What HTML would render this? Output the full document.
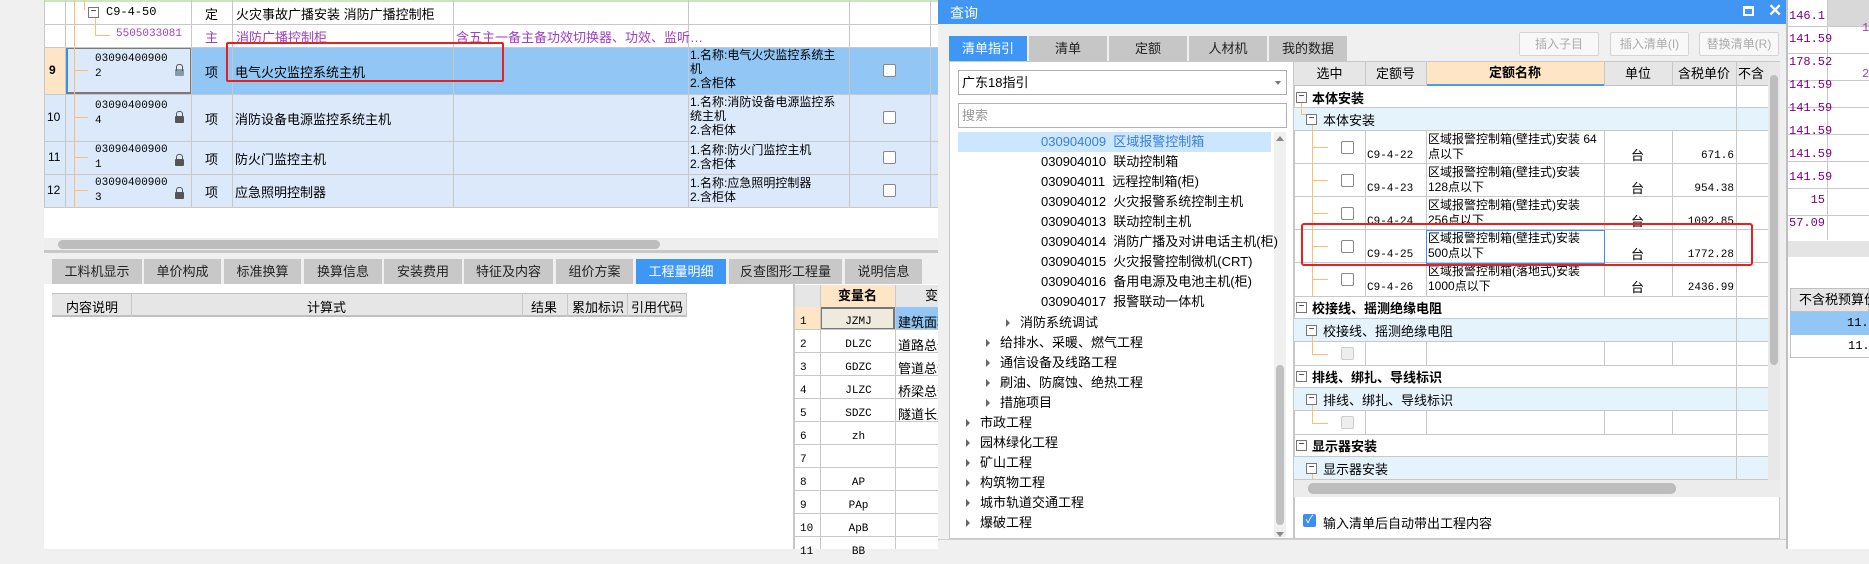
<!DOCTYPE html>
<html><head><meta charset="utf-8">
<style>
*{margin:0;padding:0;box-sizing:border-box}
body{width:1869px;height:549px;overflow:hidden;background:#f0f0f0;font-family:"Liberation Sans","Noto Sans CJK SC",sans-serif;font-size:12px;color:#000;position:relative}
.a{position:absolute}
.mono{font-family:"Liberation Mono","Noto Sans CJK SC",monospace}
.cb{position:absolute;width:13px;height:13px;border:1px solid #888;background:#fff;border-radius:2px}
.tab{position:absolute;top:259px;height:25px;background:#c8c8c8;text-align:center;line-height:25px;font-size:13px;color:#222}
.dt{position:absolute;top:36px;height:25px;background:#c6c6c6;text-align:center;line-height:25px;font-size:13px;color:#222}
.li{position:absolute;height:20px;line-height:20px;font-size:13px;white-space:nowrap}
.arr{position:absolute;width:0;height:0;border-left:4px solid #666;border-top:4px solid transparent;border-bottom:4px solid transparent}
.box{position:absolute;width:11px;height:11px;border:1px solid #777;background:#fff;font-size:10px;line-height:8px;text-align:center}
.rr{position:absolute;left:1294px;width:474px;border-bottom:1px solid #c8c8c8}
.lock{position:absolute;width:9px;height:7px;background:#555;border-radius:1px}
.lock:before{content:"";position:absolute;left:1px;top:-5px;width:5px;height:6px;border:1px solid #555;border-bottom:none;border-radius:3px 3px 0 0}
</style></head><body>
<!-- main grid -->
<div class="a" style="left:44px;top:0;width:900px;height:250px;background:#fff"></div>
<div class="a" style="left:44px;top:0;width:900px;height:2px;background:#c9e8c0"></div>
<div class="a" style="left:44px;top:47px;width:900px;height:160px;background:#dce9fb"></div>
<div class="a" style="left:191px;top:47px;width:760px;height:47px;background:#92c6f4"></div>
<div class="a" style="left:44px;top:47px;width:22px;height:47px;background:#fde5c6"></div>
<div class="a" style="left:66px;top:47px;width:126px;height:47px;border:2px solid #7a7a7a;border-left:2px solid #3d8ef0"></div>
<div class="a" style="left:44px;top:24px;width:900px;height:1px;background:#c8c8c8"></div>
<div class="a" style="left:44px;top:47px;width:900px;height:1px;background:#c8c8c8"></div>
<div class="a" style="left:44px;top:94px;width:900px;height:1px;background:#c8c8c8"></div>
<div class="a" style="left:44px;top:141px;width:900px;height:1px;background:#c8c8c8"></div>
<div class="a" style="left:44px;top:174px;width:900px;height:1px;background:#c8c8c8"></div>
<div class="a" style="left:44px;top:207px;width:900px;height:1px;background:#c8c8c8"></div>
<div class="a" style="left:44px;top:0;width:1px;height:208px;background:#c8c8c8"></div>
<div class="a" style="left:65px;top:0;width:1px;height:208px;background:#c8c8c8"></div>
<div class="a" style="left:191px;top:0;width:1px;height:208px;background:#c8c8c8"></div>
<div class="a" style="left:232px;top:0;width:1px;height:208px;background:#c8c8c8"></div>
<div class="a" style="left:453px;top:0;width:1px;height:208px;background:#c8c8c8"></div>
<div class="a" style="left:688px;top:0;width:1px;height:208px;background:#c8c8c8"></div>
<div class="a" style="left:849px;top:0;width:1px;height:208px;background:#c8c8c8"></div>
<div class="a" style="left:930px;top:0;width:1px;height:208px;background:#c8c8c8"></div>
<div class="a" style="left:74px;top:0;width:1px;height:208px;background:#f8c070"></div>
<div class="a" style="left:84px;top:0;width:1px;height:10px;background:#f8c070"></div>
<div class="a" style="left:95px;top:18px;width:1px;height:18px;background:#f8c070"></div>
<div class="a" style="left:95px;top:35px;width:15px;height:1px;background:#f8c070"></div>
<div class="a" style="left:74px;top:70px;width:14px;height:1px;background:#f8c070"></div>
<div class="a" style="left:74px;top:117px;width:14px;height:1px;background:#f8c070"></div>
<div class="a" style="left:74px;top:157px;width:14px;height:1px;background:#f8c070"></div>
<div class="a" style="left:74px;top:190px;width:14px;height:1px;background:#f8c070"></div>
<div class="box" style="left:88px;top:7px">−</div>
<div class="a mono" style="left:106px;top:5px">C9-4-50</div>
<div class="a" style="left:205px;top:4px;font-size:13px">定</div>
<div class="a" style="left:236px;top:4px;font-size:13px">火灾事故广播安装 消防广播控制柜</div>
<div class="a mono" style="left:116px;top:28px;color:#a040c0;font-size:11px">5505033081</div>
<div class="a" style="left:205px;top:27px;color:#a040c0;font-size:13px">主</div>
<div class="a" style="left:236px;top:27px;color:#a040c0;font-size:13px">消防广播控制柜</div>
<div class="a" style="left:456px;top:27px;color:#a040c0;font-size:13px;white-space:nowrap">含五主一备主备功效切换器、功效、监听…</div>
<div class="a" style="left:49px;top:63px;font-weight:bold">9</div>
<div class="a" style="left:47px;top:110px">10</div>
<div class="a" style="left:48px;top:150px">11</div>
<div class="a" style="left:47px;top:183px">12</div>
<div class="a mono" style="left:95px;top:52px;line-height:15px;font-size:11px">03090400900<br>2</div>
<div class="a mono" style="left:95px;top:99px;line-height:15px;font-size:11px">03090400900<br>4</div>
<div class="a mono" style="left:95px;top:143px;line-height:15px;font-size:11px">03090400900<br>1</div>
<div class="a mono" style="left:95px;top:176px;line-height:15px;font-size:11px">03090400900<br>3</div>
<div class="lock" style="left:175px;top:69px;background:#8899aa"></div>
<div class="lock" style="left:175px;top:116px"></div>
<div class="lock" style="left:175px;top:159px"></div>
<div class="lock" style="left:175px;top:192px"></div>
<div class="a" style="left:205px;top:62px;font-size:13px">项</div>
<div class="a" style="left:205px;top:109px;font-size:13px">项</div>
<div class="a" style="left:205px;top:149px;font-size:13px">项</div>
<div class="a" style="left:205px;top:182px;font-size:13px">项</div>
<div class="a" style="left:235px;top:62px;font-size:13px">电气火灾监控系统主机</div>
<div class="a" style="left:235px;top:109px;font-size:13px">消防设备电源监控系统主机</div>
<div class="a" style="left:235px;top:149px;font-size:13px">防火门监控主机</div>
<div class="a" style="left:235px;top:182px;font-size:13px">应急照明控制器</div>
<div class="a" style="left:690px;top:48px;line-height:14px;font-size:12px">1.名称:电气火灾监控系统主<br>机<br>2.含柜体</div>
<div class="a" style="left:690px;top:95px;line-height:14px;font-size:12px">1.名称:消防设备电源监控系<br>统主机<br>2.含柜体</div>
<div class="a" style="left:690px;top:143px;line-height:14px;font-size:12px">1.名称:防火门监控主机<br>2.含柜体</div>
<div class="a" style="left:690px;top:176px;line-height:14px;font-size:12px">1.名称:应急照明控制器<br>2.含柜体</div>
<div class="cb" style="left:883px;top:64px"></div>
<div class="cb" style="left:883px;top:111px"></div>
<div class="cb" style="left:883px;top:151px"></div>
<div class="cb" style="left:883px;top:184px"></div>
<div class="a" style="left:226px;top:42px;width:278px;height:40px;border:2px solid #e82020;border-radius:2px"></div>
<div class="a" style="left:44px;top:238px;width:900px;height:12px;background:#eee"></div>
<div class="a" style="left:58px;top:240px;width:602px;height:9px;background:#bdbdbd;border-radius:5px"></div>
<div class="a" style="left:44px;top:250px;width:900px;height:3px;background:#c8c8c8"></div>
<!-- bottom tabs -->
<div class="tab" style="left:52px;width:90px">工料机显示</div>
<div class="tab" style="left:144px;width:77px">单价构成</div>
<div class="tab" style="left:224px;width:77px">标准换算</div>
<div class="tab" style="left:304px;width:78px">换算信息</div>
<div class="tab" style="left:384px;width:78px">安装费用</div>
<div class="tab" style="left:464px;width:89px">特征及内容</div>
<div class="tab" style="left:556px;width:77px">组价方案</div>
<div class="tab" style="left:636px;width:90px;background:#3e97f5;color:#fff">工程量明细</div>
<div class="tab" style="left:729px;width:113px">反查图形工程量</div>
<div class="tab" style="left:845px;width:77px">说明信息</div>
<div class="a" style="left:44px;top:284px;width:750px;height:265px;background:#fff"></div>
<div class="a" style="left:52px;top:293px;width:634px;height:24px;background:#e6e6e6;border-top:1px solid #c0c0c0;border-bottom:2px solid #c0c0c0"></div>
<div class="a" style="left:131px;top:293px;width:1px;height:24px;background:#c8c8c8"></div>
<div class="a" style="left:522px;top:293px;width:1px;height:24px;background:#c8c8c8"></div>
<div class="a" style="left:567px;top:293px;width:1px;height:24px;background:#c8c8c8"></div>
<div class="a" style="left:627px;top:293px;width:1px;height:24px;background:#c8c8c8"></div>
<div class="a" style="left:686px;top:293px;width:1px;height:24px;background:#c8c8c8"></div>
<div class="a" style="left:66px;top:297px;font-size:13px">内容说明</div>
<div class="a" style="left:307px;top:297px;font-size:13px">计算式</div>
<div class="a" style="left:531px;top:297px;font-size:13px">结果</div>
<div class="a" style="left:572px;top:297px;font-size:13px">累加标识</div>
<div class="a" style="left:631px;top:297px;font-size:13px">引用代码</div>
<!-- var table -->
<div class="a" style="left:793px;top:284px;width:150px;height:265px;background:#fff;border-left:2px solid #c8c8c8"></div>
<div class="a" style="left:795px;top:285px;width:25px;height:22px;background:#e6e6e6"></div>
<div class="a" style="left:820px;top:285px;width:75px;height:22px;background:#fde5c6;text-align:center;font-weight:bold;font-size:13px;line-height:22px">变量名</div>
<div class="a" style="left:895px;top:285px;width:50px;height:22px;background:#e6e6e6;font-size:13px;line-height:22px;padding-left:30px">变</div>
<div class="a" style="left:795px;top:307px;width:25px;height:23px;background:#fde5c6"></div>
<div class="a" style="left:820px;top:307px;width:75px;height:23px;background:#eeeade;border:2px solid #777"></div>
<div class="a" style="left:895px;top:307px;width:50px;height:23px;background:#92c6f4"></div>
<div class="a" style="left:795px;top:307px;width:150px;height:242px;background:repeating-linear-gradient(#0000 0 22px,#c8c8c8 22px 23px)"></div>
<div class="a" style="left:820px;top:285px;width:1px;height:264px;background:#c8c8c8"></div>
<div class="a" style="left:895px;top:285px;width:1px;height:264px;background:#c8c8c8"></div>
<div class="a mono" style="left:800px;top:311px;line-height:23px;font-size:11px">1<br>2<br>3<br>4<br>5<br>6<br>7<br>8<br>9<br>10<br>11</div>
<div class="a mono" style="left:822px;top:311px;width:73px;text-align:center;line-height:23px;font-size:11px">JZMJ<br>DLZC<br>GDZC<br>JLZC<br>SDZC<br>zh<br>&nbsp;<br>AP<br>PAp<br>ApB<br>BB</div>
<div class="a" style="left:898px;top:311px;line-height:23px;font-size:13px;white-space:nowrap">建筑面积<br>道路总长<br>管道总长<br>桥梁总长<br>隧道长度</div>

<!-- right panel -->
<div class="a" style="left:1788px;top:0;width:81px;height:549px;background:#fff"></div>
<div class="a" style="left:1827px;top:0;width:42px;height:27px;background:#d8d8d8"></div>
<div class="a" style="left:1788px;top:0;width:81px;height:240px;background:repeating-linear-gradient(#0000 0 26px,#c8c8c8 26px 27px)"></div>
<div class="a" style="left:1827px;top:0;width:1px;height:240px;background:#c8c8c8"></div>
<div class="a mono" style="left:1789px;top:5px;width:36px;text-align:right;line-height:23px;color:#800080;font-size:12px">146.1<br>141.59<br>178.52<br>141.59<br>141.59<br>141.59<br>141.59<br>141.59<br>15<br>57.09</div>
<div class="a mono" style="left:1862px;top:5px;color:#a040c0;line-height:46px">1<br>2</div>
<div class="a" style="left:1788px;top:241px;width:81px;height:16px;background:#e4e4e4"></div>
<div class="a" style="left:1790px;top:288px;width:79px;height:24px;background:#e6e6e6;border:1px solid #c0c0c0;font-size:13px;line-height:22px;padding-left:8px;white-space:nowrap">不含税预算价</div>
<div class="a mono" style="left:1790px;top:312px;width:79px;height:23px;background:#92c6f4;line-height:23px;padding-left:57px">11.4</div>
<div class="a mono" style="left:1790px;top:335px;width:79px;height:23px;background:#fff;border-bottom:1px solid #c0c0c0;border-left:1px solid #c0c0c0;line-height:23px;padding-left:57px">11.4</div>

<!-- dialog -->
<div class="a" style="left:938px;top:0;width:850px;height:549px;background:#f0f0f0;border-right:2px solid #c0c0c0"></div>
<div class="a" style="left:938px;top:0;width:848px;height:24px;background:#4096f2"></div>
<div class="a" style="left:950px;top:3px;color:#fff;font-size:14px">查询</div>
<div class="a" style="left:1743px;top:6px;width:11px;height:10px;border:2px solid #fff;border-top-width:3px"></div>
<div class="a" style="left:1768px;top:1px;color:#fff;font-size:17px;font-weight:bold">✕</div>
<div class="dt" style="left:949px;width:78px;background:#3e97f5;color:#fff">清单指引</div>
<div class="dt" style="left:1029px;width:78px">清单</div>
<div class="dt" style="left:1109px;width:78px">定额</div>
<div class="dt" style="left:1189px;width:78px">人材机</div>
<div class="dt" style="left:1269px;width:78px">我的数据</div>
<div class="a" style="left:1519px;top:32px;width:80px;height:24px;border:1px solid #d4d4d4;border-radius:2px;background:#f8f8f8;color:#aaa;text-align:center;line-height:22px">插入子目</div>
<div class="a" style="left:1610px;top:32px;width:79px;height:24px;border:1px solid #d4d4d4;border-radius:2px;background:#f8f8f8;color:#aaa;text-align:center;line-height:22px">插入清单(I)</div>
<div class="a" style="left:1699px;top:32px;width:80px;height:24px;border:1px solid #d4d4d4;border-radius:2px;background:#f8f8f8;color:#aaa;text-align:center;line-height:22px">替换清单(R)</div>
<!-- left panel -->
<div class="a" style="left:949px;top:61px;width:345px;height:478px;background:#fff;border:1px solid #c8c8c8"></div>
<div class="a" style="left:958px;top:70px;width:329px;height:25px;border:1px solid #b0b0b0;background:#fff;font-size:13px;line-height:23px;padding-left:3px">广东18指引</div>
<div class="a" style="left:1275px;top:81px;border-top:4px solid #777;border-left:3px solid transparent;border-right:3px solid transparent"></div>
<div class="a" style="left:958px;top:103px;width:329px;height:25px;border:1px solid #b0b0b0;background:#fff;font-size:13px;line-height:23px;padding-left:3px;color:#999">搜索</div>
<div class="a" style="left:958px;top:132px;width:313px;height:20px;background:#cce6ff"></div>
<div class="a" style="left:1274px;top:132px;width:12px;height:405px;background:#f0f0f0"></div>
<div class="a" style="left:1276px;top:365px;width:8px;height:160px;background:#c0c0c0;border-radius:4px"></div>
<div class="a" style="left:1276px;top:136px;border-bottom:5px solid #888;border-left:4px solid transparent;border-right:4px solid transparent"></div>
<div class="a" style="left:1276px;top:532px;border-top:5px solid #888;border-left:4px solid transparent;border-right:4px solid transparent"></div>
<div class="li" style="left:1041px;top:132px;color:#3a80d8">030904009&nbsp; 区域报警控制箱</div>
<div class="li" style="left:1041px;top:152px">030904010&nbsp; 联动控制箱</div>
<div class="li" style="left:1041px;top:172px">030904011&nbsp; 远程控制箱(柜)</div>
<div class="li" style="left:1041px;top:192px">030904012&nbsp; 火灾报警系统控制主机</div>
<div class="li" style="left:1041px;top:212px">030904013&nbsp; 联动控制主机</div>
<div class="li" style="left:1041px;top:232px">030904014&nbsp; 消防广播及对讲电话主机(柜)</div>
<div class="li" style="left:1041px;top:252px">030904015&nbsp; 火灾报警控制微机(CRT)</div>
<div class="li" style="left:1041px;top:272px">030904016&nbsp; 备用电源及电池主机(柜)</div>
<div class="li" style="left:1041px;top:292px">030904017&nbsp; 报警联动一体机</div>
<div class="arr" style="left:1006px;top:319px"></div><div class="li" style="left:1020px;top:313px">消防系统调试</div>
<div class="arr" style="left:986px;top:339px"></div><div class="li" style="left:1000px;top:333px">给排水、采暖、燃气工程</div>
<div class="arr" style="left:986px;top:359px"></div><div class="li" style="left:1000px;top:353px">通信设备及线路工程</div>
<div class="arr" style="left:986px;top:379px"></div><div class="li" style="left:1000px;top:373px">刷油、防腐蚀、绝热工程</div>
<div class="arr" style="left:986px;top:399px"></div><div class="li" style="left:1000px;top:393px">措施项目</div>
<div class="arr" style="left:966px;top:419px"></div><div class="li" style="left:980px;top:413px">市政工程</div>
<div class="arr" style="left:966px;top:439px"></div><div class="li" style="left:980px;top:433px">园林绿化工程</div>
<div class="arr" style="left:966px;top:459px"></div><div class="li" style="left:980px;top:453px">矿山工程</div>
<div class="arr" style="left:966px;top:479px"></div><div class="li" style="left:980px;top:473px">构筑物工程</div>
<div class="arr" style="left:966px;top:499px"></div><div class="li" style="left:980px;top:493px">城市轨道交通工程</div>
<div class="arr" style="left:966px;top:519px"></div><div class="li" style="left:980px;top:513px">爆破工程</div>
<!-- right table -->
<div class="a" style="left:1294px;top:61px;width:486px;height:478px;background:#fff;border:1px solid #c8c8c8"></div>
<div class="a" style="left:1294px;top:62px;width:474px;height:24px;background:#e6e6e6;border-bottom:1px solid #c0c0c0"></div>
<div class="a" style="left:1426px;top:62px;width:178px;height:24px;background:#fde5c6;border-bottom:2px solid #4a9af0;text-align:center;font-weight:bold;font-size:13px;line-height:22px">定额名称</div>
<div class="a" style="left:1294px;top:62px;width:71px;text-align:center;line-height:24px;font-size:13px">选中</div>
<div class="a" style="left:1365px;top:62px;width:61px;text-align:center;line-height:24px;font-size:13px">定额号</div>
<div class="a" style="left:1604px;top:62px;width:68px;text-align:center;line-height:24px;font-size:13px">单位</div>
<div class="a" style="left:1672px;top:62px;width:64px;text-align:center;line-height:24px;font-size:13px">含税单价</div>
<div class="a" style="left:1738px;top:62px;line-height:24px;font-size:13px">不含</div>
<div class="rr" style="top:86px;height:22px"></div>
<div class="rr" style="top:108px;height:23px;background:#e5f3fd"></div>
<div class="rr" style="top:131px;height:33px"></div>
<div class="rr" style="top:164px;height:33px"></div>
<div class="rr" style="top:197px;height:33px"></div>
<div class="rr" style="top:230px;height:33px"></div>
<div class="rr" style="top:263px;height:34px"></div>
<div class="rr" style="top:297px;height:22px"></div>
<div class="rr" style="top:319px;height:23px;background:#e5f3fd"></div>
<div class="rr" style="top:342px;height:24px"></div>
<div class="rr" style="top:366px;height:22px"></div>
<div class="rr" style="top:388px;height:23px;background:#e5f3fd"></div>
<div class="rr" style="top:411px;height:24px"></div>
<div class="rr" style="top:435px;height:22px"></div>
<div class="rr" style="top:457px;height:23px;background:#e5f3fd"></div>
<div class="a" style="left:1365px;top:62px;width:1px;height:24px;background:#c8c8c8"></div>
<div class="a" style="left:1426px;top:62px;width:1px;height:24px;background:#c8c8c8"></div>
<div class="a" style="left:1604px;top:62px;width:1px;height:24px;background:#c8c8c8"></div>
<div class="a" style="left:1672px;top:62px;width:1px;height:24px;background:#c8c8c8"></div>
<div class="a" style="left:1736px;top:62px;width:1px;height:418px;background:#c8c8c8"></div>
<div class="a" style="left:1365px;top:131px;width:1px;height:166px;background:#c8c8c8"></div>
<div class="a" style="left:1426px;top:131px;width:1px;height:166px;background:#c8c8c8"></div>
<div class="a" style="left:1604px;top:131px;width:1px;height:166px;background:#c8c8c8"></div>
<div class="a" style="left:1672px;top:131px;width:1px;height:166px;background:#c8c8c8"></div>
<div class="a" style="left:1365px;top:342px;width:1px;height:24px;background:#c8c8c8"></div>
<div class="a" style="left:1426px;top:342px;width:1px;height:24px;background:#c8c8c8"></div>
<div class="a" style="left:1604px;top:342px;width:1px;height:24px;background:#c8c8c8"></div>
<div class="a" style="left:1672px;top:342px;width:1px;height:24px;background:#c8c8c8"></div>
<div class="a" style="left:1365px;top:411px;width:1px;height:24px;background:#c8c8c8"></div>
<div class="a" style="left:1426px;top:411px;width:1px;height:24px;background:#c8c8c8"></div>
<div class="a" style="left:1604px;top:411px;width:1px;height:24px;background:#c8c8c8"></div>
<div class="a" style="left:1672px;top:411px;width:1px;height:24px;background:#c8c8c8"></div>
<div class="a" style="left:1301px;top:103px;width:1px;height:12px;background:#f8c070"></div>
<div class="a" style="left:1301px;top:114px;width:5px;height:1px;background:#f8c070"></div>
<div class="a" style="left:1312px;top:125px;width:1px;height:172px;background:#f8c070"></div>
<div class="a" style="left:1312px;top:147px;width:16px;height:1px;background:#f8c070"></div>
<div class="a" style="left:1312px;top:180px;width:16px;height:1px;background:#f8c070"></div>
<div class="a" style="left:1312px;top:213px;width:16px;height:1px;background:#f8c070"></div>
<div class="a" style="left:1312px;top:246px;width:16px;height:1px;background:#f8c070"></div>
<div class="a" style="left:1312px;top:279px;width:16px;height:1px;background:#f8c070"></div>
<div class="a" style="left:1312px;top:336px;width:1px;height:18px;background:#f8c070"></div>
<div class="a" style="left:1312px;top:354px;width:16px;height:1px;background:#f8c070"></div>
<div class="a" style="left:1312px;top:405px;width:1px;height:18px;background:#f8c070"></div>
<div class="a" style="left:1312px;top:423px;width:16px;height:1px;background:#f8c070"></div>
<div class="a" style="left:1312px;top:474px;width:1px;height:8px;background:#f8c070"></div>
<div class="box" style="left:1296px;top:92px">−</div><div class="a" style="left:1312px;top:88px;font-weight:bold;font-size:13px">本体安装</div>
<div class="box" style="left:1306px;top:114px">−</div><div class="a" style="left:1323px;top:110px;font-size:13px">本体安装</div>
<div class="box" style="left:1296px;top:302px">−</div><div class="a" style="left:1312px;top:298px;font-weight:bold;font-size:13px">校接线、摇测绝缘电阻</div>
<div class="box" style="left:1306px;top:325px">−</div><div class="a" style="left:1323px;top:321px;font-size:13px">校接线、摇测绝缘电阻</div>
<div class="box" style="left:1296px;top:371px">−</div><div class="a" style="left:1312px;top:367px;font-weight:bold;font-size:13px">排线、绑扎、导线标识</div>
<div class="box" style="left:1306px;top:394px">−</div><div class="a" style="left:1323px;top:390px;font-size:13px">排线、绑扎、导线标识</div>
<div class="box" style="left:1296px;top:440px">−</div><div class="a" style="left:1312px;top:436px;font-weight:bold;font-size:13px">显示器安装</div>
<div class="box" style="left:1306px;top:463px">−</div><div class="a" style="left:1323px;top:459px;font-size:13px">显示器安装</div>
<div class="cb" style="left:1341px;top:141px"></div>
<div class="cb" style="left:1341px;top:174px"></div>
<div class="cb" style="left:1341px;top:207px"></div>
<div class="cb" style="left:1341px;top:240px"></div>
<div class="cb" style="left:1341px;top:273px"></div>
<div class="cb" style="left:1341px;top:347px;border-color:#ccc;background:#eee"></div>
<div class="cb" style="left:1341px;top:416px;border-color:#ccc;background:#eee"></div>
<div class="a mono" style="left:1367px;top:140px;line-height:33px;font-size:11px">C9-4-22<br>C9-4-23<br>C9-4-24<br>C9-4-25<br>C9-4-26</div>
<div class="a" style="left:1428px;top:132px;line-height:15px;font-size:12px">区域报警控制箱(壁挂式)安装 64<br>点以下</div>
<div class="a" style="left:1428px;top:165px;line-height:15px;font-size:12px">区域报警控制箱(壁挂式)安装<br>128点以下</div>
<div class="a" style="left:1428px;top:198px;line-height:15px;font-size:12px;height:31px;overflow:hidden">区域报警控制箱(壁挂式)安装<br>256点以下</div>
<div class="a" style="left:1426px;top:230px;width:179px;height:34px;border:1px solid #3d8ef0"></div>
<div class="a" style="left:1428px;top:231px;line-height:15px;font-size:12px">区域报警控制箱(壁挂式)安装<br>500点以下</div>
<div class="a" style="left:1428px;top:264px;line-height:15px;font-size:12px">区域报警控制箱(落地式)安装<br>1000点以下</div>
<div class="a" style="left:1631px;top:139px;line-height:33px;font-size:13px">台<br>台<br>台<br>台<br>台</div>
<div class="a mono" style="left:1674px;top:140px;width:60px;text-align:right;line-height:33px;font-size:11px">671.6<br>954.38<br>1092.85<br>1772.28<br>2436.99</div>
<div class="a" style="left:1301px;top:223px;width:452px;height:43px;border:2px solid #e82020;border-radius:3px"></div>
<div class="a" style="left:1768px;top:62px;width:12px;height:418px;background:#e8e8e8"></div>
<div class="a" style="left:1770px;top:75px;width:8px;height:290px;background:#bdbdbd;border-radius:4px"></div>
<div class="a" style="left:1294px;top:480px;width:486px;height:17px;background:#ececec"></div>
<div class="a" style="left:1308px;top:483px;width:368px;height:11px;background:#bdbdbd;border-radius:5px"></div>
<div class="a" style="left:1303px;top:514px;width:13px;height:13px;background:#3e8ef0;border-radius:2px;color:#fff;font-size:11px;line-height:13px;text-align:center">✓</div>
<div class="a" style="left:1323px;top:513px;font-size:13px">输入清单后自动带出工程内容</div>
<div class="a" style="left:938px;top:539px;width:848px;height:10px;background:#f0f0f0;border-top:1px solid #d0d0d0"></div>
</body></html>
